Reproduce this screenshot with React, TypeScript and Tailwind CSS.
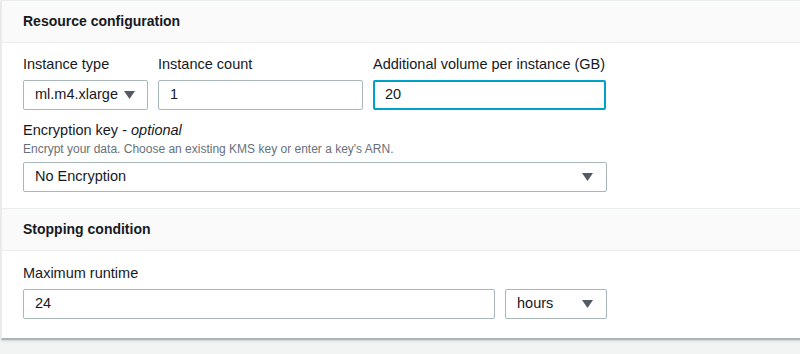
import React from 'react';

function Caret() {
  return (
    <svg width="11" height="8" viewBox="0 0 11 8" className="shrink-0">
      <path d="M0 0 L11 0 L5.5 8 Z" fill="#545b64" />
    </svg>
  );
}

function Label({ children }: { children: React.ReactNode }) {
  return <div className="text-[14.5px] leading-[20px] text-[#16191f] mb-[6px]">{children}</div>;
}

function Select({ value, className }: { value: string; className: string }) {
  return (
    <div className={`h-[30px] border border-[#aab7b8] rounded-[2px] bg-white flex items-center pl-[11px] text-[14.5px] text-[#16191f] ${className}`}>
      <span>{value}</span>
      <Caret />
    </div>
  );
}

function Input({ value, focused, className }: { value: string; focused?: boolean; className: string }) {
  return (
    <div
      className={`h-[30px] rounded-[2px] bg-white flex items-center text-[14.5px] text-[#16191f] ${
        focused ? 'border-2 border-[#00a1c9] pl-[10px]' : 'border border-[#aab7b8] pl-[11px]'
      } ${className}`}
    >
      {value}
    </div>
  );
}

function Header({ title }: { title: string }) {
  return (
    <div className="h-[42px] bg-[#fafafa] border-b border-[#eaeded] flex items-center px-[21px]">
      <h2 className="text-[14px] font-bold text-[#16191f]">{title}</h2>
    </div>
  );
}

export default function App() {
  return (
    <div
      className="w-[800px] h-[354px] overflow-hidden bg-[#f2f3f3]"
      style={{ fontFamily: '"Liberation Sans", Arial, sans-serif' }}
    >
      <div className="ml-[1px] w-[820px] bg-white border-l border-t border-[#eaeded] border-b-2 border-b-[#aab7b8] shadow-sm">
        {/* Resource configuration */}
        <Header title="Resource configuration" />
        <div className="px-[21px] pt-[11px] pb-[16px] border-b border-[#eaeded]">
          <div className="flex gap-[10px]">
            <div>
              <Label>Instance type</Label>
              <Select value="ml.m4.xlarge" className="w-[125px] gap-[6px]" />
            </div>
            <div>
              <Label>Instance count</Label>
              <Input value="1" className="w-[205px]" />
            </div>
            <div>
              <Label>Additional volume per instance (GB)</Label>
              <Input value="20" focused className="w-[233px]" />
            </div>
          </div>
          <div className="mt-[10px]">
            <div className="text-[14.5px] leading-[20px] text-[#16191f]">
              Encryption key - <i>optional</i>
            </div>
            <div className="text-[12px] leading-[16px] text-[#687078] mt-[1px] mb-[5px]">
              Encrypt your data. Choose an existing KMS key or enter a key's ARN.
            </div>
            <Select value="No Encryption" className="w-[584px] justify-between pr-[13px]" />
          </div>
        </div>

        {/* Stopping condition */}
        <Header title="Stopping condition" />
        <div className="px-[21px] pt-[12px] pb-[19px]">
          <Label>Maximum runtime</Label>
          <div className="flex gap-[10px]">
            <Input value="24" className="w-[472px]" />
            <Select value="hours" className="w-[102px] justify-between pr-[13px]" />
          </div>
        </div>
      </div>
    </div>
  );
}
